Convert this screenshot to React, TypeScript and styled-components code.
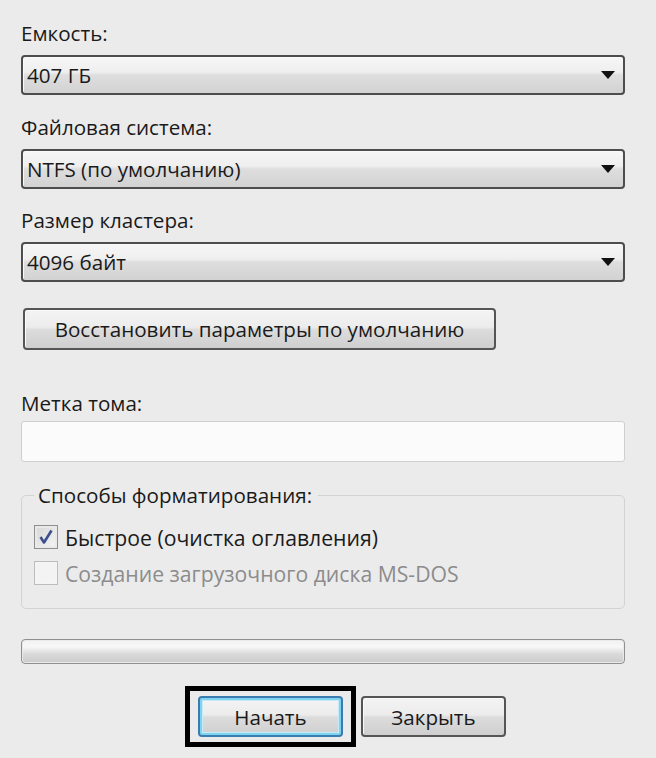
import React from "react";
import styled, { createGlobalStyle } from "styled-components";

const Global = createGlobalStyle`
  html, body { margin: 0; padding: 0; background: #ebebeb; }
  * { box-sizing: border-box; }
`;

const Page = styled.div`
  width: 656px;
  height: 758px;
  background: #ebebeb;
  font-family: "Open Sans", "Noto Sans", sans-serif;
  font-size: 20.6px;
  color: #1a1a1a;
  padding: 21px 31px 0 21px;
  display: flex;
  flex-direction: column;
`;

const Label = styled.div<{ $mt?: number; $mb?: number }>`
  height: 24px;
  line-height: 24px;
  margin-top: ${(p) => p.$mt ?? 0}px;
  margin-bottom: ${(p) => p.$mb ?? 10}px;
  white-space: nowrap;
`;

const Combo = styled.div`
  height: 40px;
  border: 2px solid #4d4d4d;
  border-radius: 4px;
  background: linear-gradient(#f6f6f6 0%, #efefef 42%, #dedede 50%, #d2d2d2 100%);
  box-shadow: inset 1px 1px 0 #fafafa;
  display: flex;
  align-items: center;
  padding: 0 8px 0 4px;
`;

const ComboText = styled.span`
  flex: 1;
  line-height: 1;
`;

const Arrow = styled.span`
  width: 0;
  height: 0;
  border-left: 7px solid transparent;
  border-right: 7px solid transparent;
  border-top: 8px solid #111;
`;

const PushButton = styled.div<{ $w: number; $h?: number; $primary?: boolean }>`
  width: ${(p) => p.$w}px;
  height: ${(p) => p.$h ?? 42}px;
  border: ${(p) => (p.$primary ? "2px solid #3a7bb0" : "2px solid #555")};
  border-radius: 4px;
  background: linear-gradient(#f4f4f4 0%, #ececec 45%, #dcdcdc 52%, #cfcfcf 100%);
  box-shadow: ${(p) =>
    p.$primary ? "inset 0 0 0 2px #7fd3ef, inset 0 0 0 3px #c8eaf7" : "inset 1px 1px 0 #fafafa"};
  display: flex;
  align-items: center;
  justify-content: center;
  white-space: nowrap;
`;

const RestoreRow = styled.div`
  margin-top: 26px;
  padding-left: 2px;
`;

const TextField = styled.div`
  height: 41px;
  border: 1px solid #cfcfcf;
  border-radius: 3px;
  background: #fbfbfb;
`;

const Group = styled.fieldset`
  margin: 21px 0 0 0;
  padding: 18px 0 0 12px;
  height: 126px;
  border: 1px solid #d3d3d3;
  border-radius: 5px;
  display: flex;
  flex-direction: column;
  gap: 12px;
  font-size: 21.2px;
`;

const Legend = styled.legend`
  padding: 0 6px 0 4px;
  margin-left: 0;
  line-height: 24px;
  font-size: 20.6px;
`;

const CheckRow = styled.div<{ $disabled?: boolean }>`
  display: flex;
  align-items: center;
  gap: 7px;
  height: 24px;
  color: ${(p) => (p.$disabled ? "#8c8c8c" : "#1a1a1a")};
`;

const Box = styled.span<{ $disabled?: boolean }>`
  width: 24px;
  height: 24px;
  border: 1px solid ${(p) => (p.$disabled ? "#bdbdbd" : "#8e8f8f")};
  background: ${(p) =>
    p.$disabled ? "#f3f3f3" : "linear-gradient(135deg, #d6d6d6, #f6f6f6)"};
  box-shadow: inset 0 0 0 2px ${(p) => (p.$disabled ? "#f4f4f4" : "#e9e9e9")};
  display: flex;
  align-items: center;
  justify-content: center;
`;

const Progress = styled.div`
  margin-top: 30px;
  height: 25px;
  border: 1px solid #8f8f8f;
  border-radius: 4px;
  background: linear-gradient(#f2f2f2 0%, #f7f7f7 30%, #dadada 60%, #cbcbcb 100%);
  box-shadow: inset 0 0 0 1px #eaeaea;
`;

const ButtonRow = styled.div`
  margin-top: 22px;
  padding-left: 164px;
  display: flex;
  align-items: center;
  gap: 5px;
`;

const Highlight = styled.div`
  border: 5px solid #000;
  padding: 5px 8px 5px 8px;
`;

const combos = [
  { label: "Емкость:", value: "407 ГБ", mt: 0 },
  { label: "Файловая система:", value: "NTFS (по умолчанию)", mt: 20 },
  { label: "Размер кластера:", value: "4096 байт", mt: 19 },
];

export default function App() {
  return (
    <>
      <Global />
      <Page>
        {combos.map((c) => (
          <React.Fragment key={c.label}>
            <Label $mt={c.mt}>{c.label}</Label>
            <Combo>
              <ComboText>{c.value}</ComboText>
              <Arrow />
            </Combo>
          </React.Fragment>
        ))}
        <RestoreRow>
          <PushButton $w={473}>Восстановить параметры по умолчанию</PushButton>
        </RestoreRow>
        <Label $mt={41} $mb={6}>Метка тома:</Label>
        <TextField />
        <Group>
          <Legend>Способы форматирования:</Legend>
          <CheckRow>
            <Box>
              <svg width="16" height="16" viewBox="0 0 16 16">
                <path d="M2.5 8 L6 13.5 L13.5 1.5" fill="none" stroke="#3d4f8e" strokeWidth="2.6" strokeLinejoin="round" />
              </svg>
            </Box>
            <span>Быстрое (очистка оглавления)</span>
          </CheckRow>
          <CheckRow $disabled>
            <Box $disabled />
            <span>Создание загрузочного диска MS-DOS</span>
          </CheckRow>
        </Group>
        <Progress />
        <ButtonRow>
          <Highlight>
            <PushButton $w={145} $h={41} $primary>Начать</PushButton>
          </Highlight>
          <PushButton $w={145} $h={41}>Закрыть</PushButton>
        </ButtonRow>
      </Page>
    </>
  );
}
